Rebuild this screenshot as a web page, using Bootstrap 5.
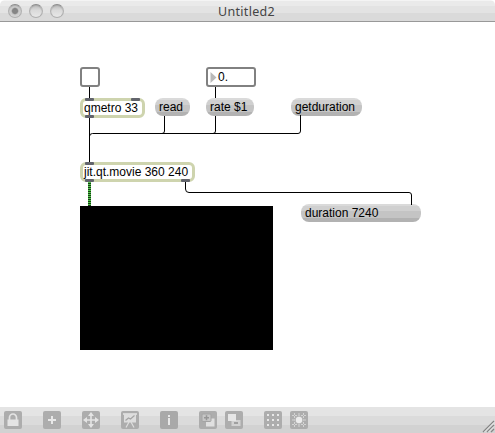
<!DOCTYPE html>
<html lang="en">
<head>
<meta charset="utf-8">
<meta name="viewport" content="width=device-width, initial-scale=1">
<title>Untitled2</title>
<link rel="stylesheet" href="https://cdn.jsdelivr.net/npm/bootstrap@5.3.0/dist/css/bootstrap.min.css">
<style>
body{font:12px/14px "Liberation Sans",Arial,sans-serif;color:#000;background:#fff}
.titlebar{height:22px;background:linear-gradient(#f4f4f4 1px,#eaeaea 1px 6px,#e3e3e3 6px 13px,#dadada 13px);border-bottom:1px solid #999;border-radius:5px 5px 0 0;padding-left:8px}
.titlebar h1{font:12.5px/20px "Noto Sans","Open Sans",sans-serif;letter-spacing:.3px;color:#444;padding-right:66px;margin-top:2px}
.lights{width:56px}
.light{width:14px;height:14px;border-radius:50%;background:linear-gradient(#bcbcbc,#dadada 45%,#e8e8e8);border:1px solid #b0b0b0;border-top-color:#8c8c8c;box-shadow:inset 0 1px 1px #aaa}
.light.edited{background:radial-gradient(circle,#858585 2.5px,#c9c9c9 3.8px,#d8d8d8 6px)}
.node{position:absolute;white-space:pre}
.wires{left:0;top:0}
.objbox{height:20px;border:3px solid #ced4ae;border-radius:6px;background:#fff;padding-left:1px}
.valbox{height:20px;border:2px solid #818181;border-radius:3px;background:#fff}
.msg{height:18px;border-radius:8px;background:linear-gradient(#dadada 2px,#d0d0d0 2px 7px,#c4c4c4 7px 14px,#b2b2b2 14px);padding:2px 0 0 4px}
.toggle{left:80px;top:67px;width:20px}
.number{left:206px;top:67px;width:50px;padding:1px 0 0 1px}
.qmetro{left:80px;top:98px;width:65px}
.read{left:155px;top:98px;width:35px}
.rate{left:206px;top:98px;width:48px}
.getdur{left:291px;top:98px;width:71px}
.movie{left:80px;top:162px;width:115px}
.dur{left:301px;top:204px;width:120px}
.screen{left:80px;top:206px;width:193px;height:144px;background:#000}
.toolbar{height:26px;background:linear-gradient(#e4e4e4 9px,#dbdbdb 9px 18px,#d2d2d2 18px);padding:4px 0 0 4px;gap:21px}
.toolbar svg{display:block}
.tool-pair{gap:8px}
.grip{right:0;bottom:0}
</style>
<script src="https://cdn.jsdelivr.net/npm/bootstrap@5.3.0/dist/js/bootstrap.bundle.min.js"></script>
</head>
<body class="vh-100 d-flex flex-column overflow-hidden">
<header class="titlebar d-flex align-items-center flex-shrink-0">
  <div class="lights d-flex justify-content-between"><span class="light edited"></span><span class="light"></span><span class="light"></span></div>
  <h1 class="flex-fill text-center mb-0">Untitled2</h1>
</header>
<main class="flex-fill">
  <div class="node valbox toggle"></div>
  <div class="node valbox number d-flex"><svg width="9" height="14"><path d="M1.500 2v11l6-5.500z" fill="#b9b9b9"/></svg>0.</div>
  <div class="node objbox qmetro">qmetro 33</div>
  <div class="node msg read">read</div>
  <div class="node msg rate">rate $1</div>
  <div class="node msg getdur">getduration</div>
  <div class="node objbox movie">jit.qt.movie 360 240</div>
  <div class="node msg dur">duration 7240</div>
  <div class="node screen"></div>
  <svg class="node wires" width="495" height="400" fill="none">
    <g stroke="#000">
      <path d="M89.500 87v12M89.500 117v46M215.500 87v11M164.500 116v15q0 2.500-2.500 2.500M215.500 116v15q0 2.500-2.500 2.500M300.500 115v16q0 2.500-2.500 2.500H92.500q-3 0-3 3"/>
      <path d="M185.500 182v7q0 3.500 3.500 3.500h220q2.500 0 2.500 2.500v10"/>
    </g>
    <path d="M89.500 182v24" stroke="#52c84a" stroke-width="3"/>
    <path d="M89.500 183v23" stroke="#183c16" stroke-width="3" stroke-dasharray="1 1"/>
    <g fill="#62646c">
      <rect x="85" y="98" width="9" height="3" rx="1"/><rect x="131" y="98" width="9" height="3" rx="1"/><rect x="85" y="115" width="9" height="3" rx="1"/>
      <rect x="85" y="162" width="9" height="3" rx="1"/><rect x="85" y="179" width="9" height="3" rx="1"/><rect x="181" y="179" width="9" height="3" rx="1"/>
    </g>
  </svg>
</main>
<footer class="toolbar d-flex flex-shrink-0 position-relative">
  <svg width="18" height="18"><rect width="18" height="18" rx="2" fill="#adadad"/><path d="M5.500 9V6.500a3.500 3.500 0 0 1 7 0V9" stroke="#e4e4e4" stroke-width="1.700" fill="none"/><path d="M3.500 8.500h11V15h-11z" fill="#e4e4e4"/></svg>
  <svg width="18" height="18"><rect width="18" height="18" rx="2" fill="#adadad"/><path d="M9 5v8M5 9h8" stroke="#e8e8e8" stroke-width="2"/></svg>
  <svg width="18" height="18"><rect width="18" height="18" rx="2" fill="#adadad"/><path d="M9 4v10M4 9h10" stroke="#e4e4e4" stroke-width="1.600"/><path d="M9 1l3 4H6zM9 17l3-4H6zM1 9l4-3v6zM17 9l-4-3v6z" fill="#e4e4e4"/></svg>
  <svg width="18" height="18"><rect width="18" height="18" rx="2" fill="#adadad"/><path d="M2 3h14" stroke="#e6e6e6" stroke-width="1.500"/><path d="M3 3h12v8.500H3z" fill="#dedede"/><path d="M4.500 9.500l3-2.500 2 1 4-3.500" stroke="#a4a4a4" stroke-width="1.200" fill="none"/><path d="M8 11l-3 5.500M10 11l3 5.500" stroke="#dedede" stroke-width="1.200"/></svg>
  <svg width="18" height="18"><rect width="18" height="18" rx="2" fill="#a9a9a9"/><path d="M8 4h2v2H8zM8 7h2v7H8z" fill="#e8e8e8"/></svg>
  <div class="tool-pair d-flex">
    <svg width="18" height="18"><rect width="18" height="18" rx="2" fill="#adadad"/><path d="M7 7.500h8.500v8H7z" fill="#e0e0e0"/><rect x="3" y="3" width="9" height="7.500" rx="1" fill="#c6c6c6" stroke="#a4a4a4"/><path d="M7.500 4.250v5M5 6.750h5" stroke="#969696" stroke-width="1.500"/></svg>
    <svg width="18" height="18"><rect width="18" height="18" rx="2" fill="#adadad"/><path d="M6.500 9h9v6h-9z" fill="#d2d2d2"/><path d="M9 12h4" stroke="#a0a0a0" stroke-width="2"/><path d="M3 3h8v7H3z" fill="#e6e6e6"/></svg>
  </div>
  <div class="tool-pair d-flex">
    <svg width="18" height="18"><rect width="18" height="18" rx="2" fill="#adadad"/><path d="M3 4h12M3 9h12M3 14h12" stroke="#e8e8e8" stroke-width="2" stroke-dasharray="2 3"/></svg>
    <svg width="18" height="18"><rect width="18" height="18" rx="2" fill="#adadad"/><path d="M4.500 2v14M9 2v14M13.500 2v14M2 4.500h14M2 9h14M2 13.500h14" stroke="#d4d4d4" stroke-dasharray="2 1"/><circle cx="9" cy="9" r="4.500" fill="#b4b4b4"/><circle cx="9" cy="9" r="3.200" fill="#ececec"/></svg>
  </div>
  <svg class="grip position-absolute" width="14" height="14"><path d="M2 13L13 2M6 13L13 6M10 13l3-3" stroke="#858585" stroke-width="1.200"/><path d="M3.500 13L13 3.500M7.500 13L13 7.500" stroke="#eee" stroke-width=".8"/></svg>
</footer>
</body>
</html>
